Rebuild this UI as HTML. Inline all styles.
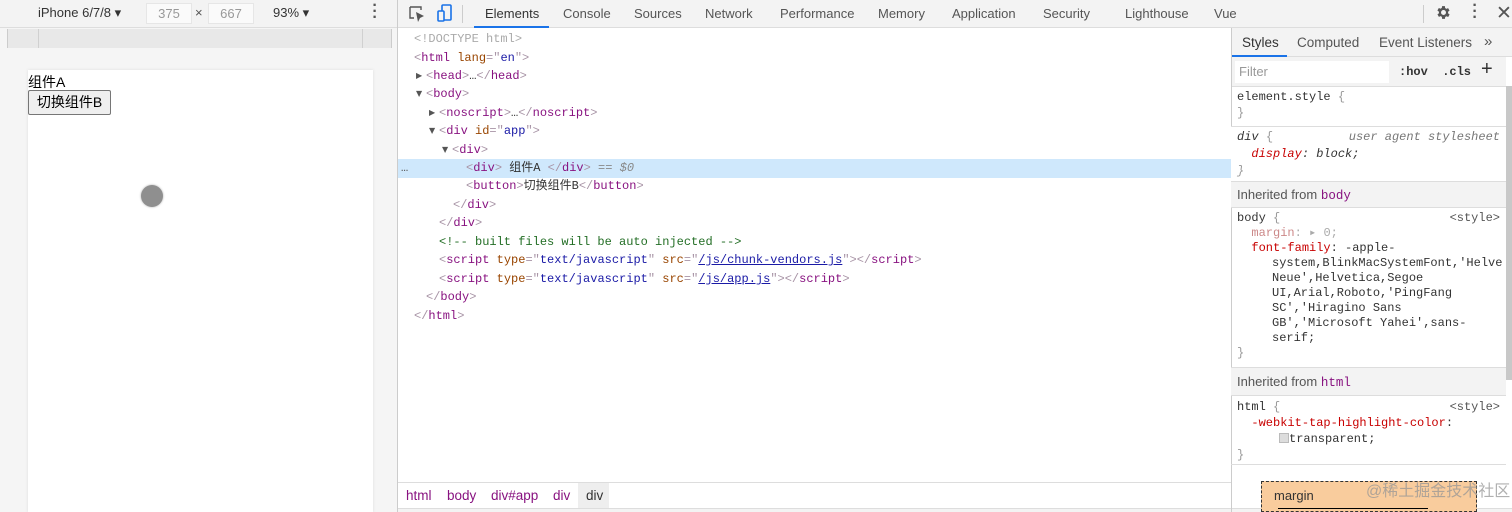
<!DOCTYPE html>
<html><head><meta charset="utf-8"><style>
*{box-sizing:border-box;margin:0;padding:0}
body{width:1512px;height:512px;overflow:hidden;background:#fff;font-family:"Liberation Sans","Noto Sans CJK SC",sans-serif;font-size:13px;color:#333;position:relative}
.abs{position:absolute}
.mono{font-family:"Liberation Mono","Noto Sans CJK SC",monospace;font-size:12px}
.tb{background:#f3f3f3;border-bottom:1px solid #ddd}
.tag{color:#881280}.br{color:#a894a6}.an{color:#994500}.av{color:#1a1aa6}.cm{color:#236e25}
.line{position:absolute;white-space:pre;height:18px;line-height:18px}
.tri{font-size:8px;color:#555;font-family:"DejaVu Sans",sans-serif;display:inline-block;width:10px;vertical-align:1px}
.sec{position:absolute;left:1231px;width:275px;border-bottom:1px solid #ddd}
.hd{background:#f3f3f3;color:#555;font-size:13px;padding-left:6px}
.pn{color:#c80000}
</style></head><body>
<div class="abs tb" style="left:0;top:0;width:397px;height:28px;background:#f3f3f3"></div>
<div class="abs" style="left:38px;top:5px;font-size:13px;color:#333">iPhone 6/7/8 ▾</div>
<div class="abs" style="left:146px;top:3px;width:46px;height:21px;background:#fafafa;border:1px solid #e6e6e6;color:#999;text-align:center;line-height:19px">375</div>
<div class="abs" style="left:195px;top:5px;color:#555">×</div>
<div class="abs" style="left:208px;top:3px;width:46px;height:21px;background:#fafafa;border:1px solid #e6e6e6;color:#999;text-align:center;line-height:19px">667</div>
<div class="abs" style="left:273px;top:5px;color:#333">93% ▾</div>
<div class="abs" style="left:372px;top:3px;color:#555;font-size:16px;font-weight:bold;line-height:6px;width:6px;text-align:center">·<br>·<br>·</div>
<div class="abs" style="left:0;top:28px;width:397px;height:484px;background:#f5f5f5"></div>
<div class="abs" style="left:7px;top:29px;width:385px;height:19px;background:#e8e8e8;border-left:1px solid #ccc;border-right:1px solid #ccc"></div>
<div class="abs" style="left:38px;top:29px;width:1px;height:19px;background:#d0d0d0"></div>
<div class="abs" style="left:362px;top:29px;width:1px;height:19px;background:#d0d0d0"></div>
<div class="abs" style="left:28px;top:70px;width:345px;height:442px;background:#fff;box-shadow:0 0 3px #ddd"></div>
<div class="abs" style="left:28px;top:72px;font-size:14px;color:#000">组件A</div>
<div class="abs" style="left:28px;top:90px;width:83px;height:25px;border:1px solid #767676;border-radius:2px;background:#efefef;font-size:14px;color:#000;text-align:center;line-height:23px">切换组件B</div>
<div class="abs" style="left:141px;top:185px;width:22px;height:22px;border-radius:50%;background:#8f8f8f;box-shadow:0 0 2px #aaa"></div>
<div class="abs" style="left:397px;top:0;width:1px;height:512px;background:#ccc"></div>

<div class="abs tb" style="left:398px;top:0;width:1114px;height:28px"></div>
<svg class="abs" style="left:407px;top:4px" width="20" height="20" viewBox="0 0 20 20"><path d="M3 3h11v3M3 3v11h4" fill="none" stroke="#555" stroke-width="1.4"/><path d="M9 8l2 10 2-4 4-2z" fill="#555"/></svg>
<svg class="abs" style="left:435px;top:3px" width="20" height="20" viewBox="0 0 20 20"><rect x="7" y="2" width="9" height="15" rx="1" fill="none" stroke="#1a73e8" stroke-width="1.6"/><rect x="3" y="8" width="6" height="10" rx="1" fill="#f3f3f3" stroke="#1a73e8" stroke-width="1.6"/></svg>
<div class="abs" style="left:462px;top:5px;width:1px;height:18px;background:#ccc"></div>
<div class="abs" style="left:474px;top:26px;width:75px;height:2px;background:#1a73e8"></div>
<div class="abs" style="top:6px;left:0;color:#333;font-size:13px">
<span class="abs" style="left:485px">Elements</span><span class="abs" style="left:563px;color:#555">Console</span><span class="abs" style="left:634px;color:#555">Sources</span><span class="abs" style="left:705px;color:#555">Network</span><span class="abs" style="left:780px;color:#555">Performance</span><span class="abs" style="left:878px;color:#555">Memory</span><span class="abs" style="left:952px;color:#555">Application</span><span class="abs" style="left:1043px;color:#555">Security</span><span class="abs" style="left:1125px;color:#555">Lighthouse</span><span class="abs" style="left:1214px;color:#555">Vue</span></div>
<div class="abs" style="left:1423px;top:5px;width:1px;height:18px;background:#ccc"></div>
<svg class="abs" style="left:1435px;top:4px" width="17" height="17" viewBox="0 0 24 24"><path fill="#555" d="M19.4 13a7.5 7.5 0 000-2l2.1-1.6-2-3.5-2.5 1a7 7 0 00-1.7-1L15 3h-4l-.4 2.7a7 7 0 00-1.7 1l-2.5-1-2 3.5L6.6 11a7.5 7.5 0 000 2l-2.1 1.6 2 3.5 2.5-1a7 7 0 001.7 1L11 21h4l.4-2.7a7 7 0 001.7-1l2.5 1 2-3.5zM13 15.5a3.5 3.5 0 110-7 3.5 3.5 0 010 7z" transform="translate(-1 0)"/></svg>
<div class="abs" style="left:1472px;top:3px;color:#555;font-size:16px;font-weight:bold;line-height:6px;width:6px;text-align:center">·<br>·<br>·</div>
<div class="abs" style="left:1496px;top:2px;color:#555;font-size:19px">✕</div>

<div class="abs" style="left:398px;top:159px;width:833px;height:19px;background:#cfe8fc"></div>
<div class="mono" style="position:absolute;left:0;top:0">
<div class="line" style="left:414px;top:30px;color:#aaa">&lt;!DOCTYPE html&gt;</div>
<div class="line" style="left:414px;top:49px"><span class="br">&lt;</span><span class="tag">html</span> <span class="an">lang</span><span class="br">="</span><span class="av">en</span><span class="br">"&gt;</span></div>
<div class="line" style="left:416px;top:67px"><span class="tri">▶</span><span class="br">&lt;</span><span class="tag">head</span><span class="br">&gt;</span>…<span class="br">&lt;/</span><span class="tag">head</span><span class="br">&gt;</span></div>
<div class="line" style="left:416px;top:85px"><span class="tri">▼</span><span class="br">&lt;</span><span class="tag">body</span><span class="br">&gt;</span></div>
<div class="line" style="left:429px;top:104px"><span class="tri">▶</span><span class="br">&lt;</span><span class="tag">noscript</span><span class="br">&gt;</span>…<span class="br">&lt;/</span><span class="tag">noscript</span><span class="br">&gt;</span></div>
<div class="line" style="left:429px;top:122px"><span class="tri">▼</span><span class="br">&lt;</span><span class="tag">div</span> <span class="an">id</span><span class="br">="</span><span class="av">app</span><span class="br">"&gt;</span></div>
<div class="line" style="left:442px;top:141px"><span class="tri">▼</span><span class="br">&lt;</span><span class="tag">div</span><span class="br">&gt;</span></div>
<div class="line" style="left:401px;top:159px;color:#555">…</div>
<div class="line" style="left:466px;top:159px"><span class="br">&lt;</span><span class="tag">div</span><span class="br">&gt;</span> 组件A <span class="br">&lt;/</span><span class="tag">div</span><span class="br">&gt;</span> <span style="color:#888;font-style:italic">== $0</span></div>
<div class="line" style="left:466px;top:177px"><span class="br">&lt;</span><span class="tag">button</span><span class="br">&gt;</span>切换组件B<span class="br">&lt;/</span><span class="tag">button</span><span class="br">&gt;</span></div>
<div class="line" style="left:453px;top:196px"><span class="br">&lt;/</span><span class="tag">div</span><span class="br">&gt;</span></div>
<div class="line" style="left:439px;top:214px"><span class="br">&lt;/</span><span class="tag">div</span><span class="br">&gt;</span></div>
<div class="line cm" style="left:439px;top:233px">&lt;!-- built files will be auto injected --&gt;</div>
<div class="line" style="left:439px;top:251px"><span class="br">&lt;</span><span class="tag">script</span> <span class="an">type</span><span class="br">="</span><span class="av">text/javascript</span><span class="br">"</span> <span class="an">src</span><span class="br">="</span><span class="av" style="text-decoration:underline">/js/chunk-vendors.js</span><span class="br">"&gt;&lt;/</span><span class="tag">script</span><span class="br">&gt;</span></div>
<div class="line" style="left:439px;top:270px"><span class="br">&lt;</span><span class="tag">script</span> <span class="an">type</span><span class="br">="</span><span class="av">text/javascript</span><span class="br">"</span> <span class="an">src</span><span class="br">="</span><span class="av" style="text-decoration:underline">/js/app.js</span><span class="br">"&gt;&lt;/</span><span class="tag">script</span><span class="br">&gt;</span></div>
<div class="line" style="left:426px;top:288px"><span class="br">&lt;/</span><span class="tag">body</span><span class="br">&gt;</span></div>
<div class="line" style="left:414px;top:307px"><span class="br">&lt;/</span><span class="tag">html</span><span class="br">&gt;</span></div>
</div>

<div class="abs" style="left:398px;top:482px;width:833px;height:1px;background:#ddd"></div>
<div class="abs" style="left:398px;top:483px;width:833px;height:25px;background:#fff;font-size:13.5px;color:#881280">
<span class="abs" style="left:8px;top:5px">html</span><span class="abs" style="left:49px;top:5px">body</span><span class="abs" style="left:93px;top:5px">div#app</span><span class="abs" style="left:155px;top:5px">div</span>
<span class="abs" style="left:180px;top:0;width:31px;height:25px;background:#eee"></span><span class="abs" style="left:188px;top:5px;color:#333">div</span></div>
<div class="abs" style="left:398px;top:508px;width:1114px;height:4px;background:#f3f3f3;border-top:1px solid #ddd"></div>

<div class="abs" style="left:1231px;top:28px;width:1px;height:484px;background:#ccc"></div>
<div class="abs" style="left:1232px;top:28px;width:280px;height:29px;background:#f3f3f3;border-bottom:1px solid #ddd;font-size:13.5px;color:#555">
<span class="abs" style="left:10px;top:7px;color:#333">Styles</span><span class="abs" style="left:65px;top:7px">Computed</span><span class="abs" style="left:147px;top:7px">Event Listeners</span><span class="abs" style="left:252px;top:5px;font-size:15px">»</span>
<span class="abs" style="left:0;top:27px;width:55px;height:2px;background:#1a73e8"></span></div>
<div class="abs" style="left:1232px;top:57px;width:274px;height:30px;background:#f3f3f3;border-bottom:1px solid #ddd"></div>
<div class="abs" style="left:1235px;top:61px;width:154px;height:22px;background:#fff;color:#999;padding:3px 4px">Filter</div>
<div class="abs mono" style="left:1399px;top:65px;color:#333;font-weight:bold">:hov&nbsp;&nbsp;.cls</div>
<div class="abs" style="left:1481px;top:58px;font-size:20px;color:#333">+</div>
<div class="abs" style="left:1506px;top:86px;width:6px;height:294px;background:#c8c8c8"></div>

<div class="sec mono" style="top:87px;height:40px;padding:2px 6px;line-height:16px;color:#333">element.style <span style="color:#999">{</span><br><span style="color:#999">}</span></div>
<div class="sec mono" style="top:127px;height:55px;padding:2px 6px;line-height:17px;color:#333;background:#fff"><i>div</i> <span style="color:#999">{</span><span style="float:right;color:#777;font-style:italic">user agent stylesheet</span><br>&nbsp;&nbsp;<i><span class="pn">display</span>: block;</i><br><i style="color:#999">}</i></div>
<div class="sec hd" style="top:182px;height:26px;line-height:26px">Inherited from <span class="mono tag" style="font-size:12.5px">body</span></div>
<div class="sec mono" style="top:208px;height:160px;padding:3px 6px;line-height:15px;color:#333">body <span style="color:#999">{</span><span style="float:right;color:#555">&lt;style&gt;</span><br>
&nbsp;&nbsp;<span style="color:#c88">margin</span><span style="color:#aaa">: ▸ 0;</span><br>
&nbsp;&nbsp;<span class="pn">font-family</span>: -apple-<br>
<div style="padding-left:35px;white-space:nowrap">system,BlinkMacSystemFont,'Helve<br>Neue',Helvetica,Segoe<br>UI,Arial,Roboto,'PingFang<br>SC','Hiragino Sans<br>GB','Microsoft Yahei',sans-<br>serif;</div><span style="color:#999">}</span></div>
<div class="sec hd" style="top:368px;height:28px;line-height:28px">Inherited from <span class="mono tag" style="font-size:12.5px">html</span></div>
<div class="sec mono" style="top:396px;height:69px;padding:3px 6px;line-height:16px;color:#333">html <span style="color:#999">{</span><span style="float:right;color:#555">&lt;style&gt;</span><br>
&nbsp;&nbsp;<span class="pn">-webkit-tap-highlight-color</span>:<br>
<span style="padding-left:42px"></span><span style="display:inline-block;width:10px;height:10px;border:1px solid #bbb;background:#ddd;vertical-align:-1px"></span>transparent;<br><span style="color:#999">}</span></div>
<div class="abs" style="left:1261px;top:481px;width:216px;height:31px;background:#f9cc9d;border:1px dashed #333"></div>
<div class="abs" style="left:1274px;top:488px;color:#333;font-size:13px">margin</div>
<div class="abs" style="left:1278px;top:508px;width:150px;height:4px;border-top:1px solid #000"></div>
<div class="abs" style="left:1366px;top:477px;color:rgba(150,150,150,0.75);font-size:16px;white-space:nowrap">@稀土掘金技术社区</div>
</body></html>
